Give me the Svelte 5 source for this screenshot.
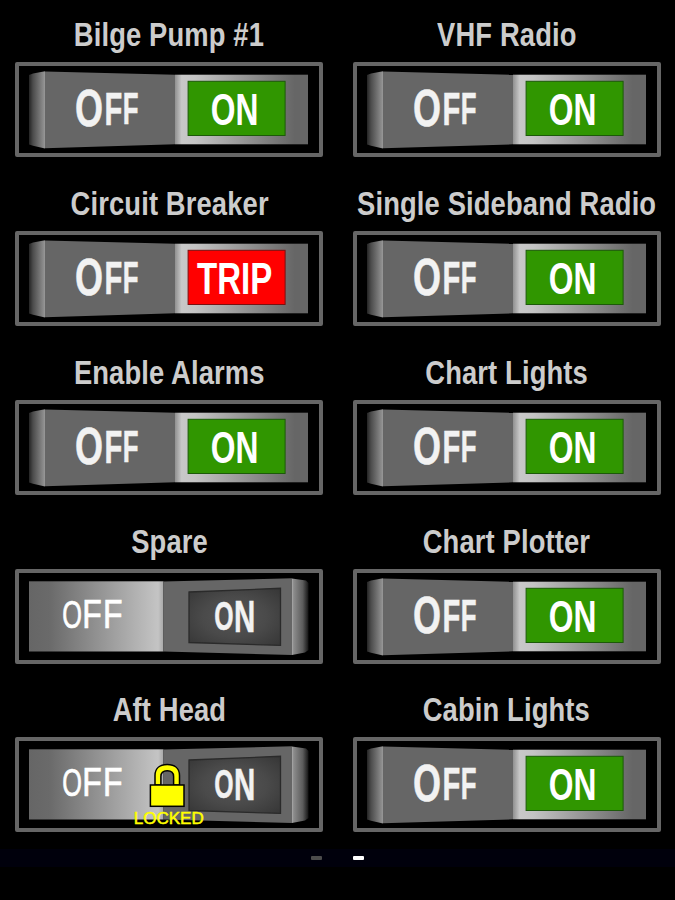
<script lang="ts">
	type Glyph = { ch: string; x: number; y: number; size: number; sx: number; weight?: number };
	type Circuit = { name: string; state: 'on' | 'off' | 'trip'; locked?: boolean };

	const circuits: Circuit[] = [
		{ name: 'Bilge Pump #1', state: 'on' },
		{ name: 'VHF Radio', state: 'on' },
		{ name: 'Circuit Breaker', state: 'trip' },
		{ name: 'Single Sideband Radio', state: 'on' },
		{ name: 'Enable Alarms', state: 'on' },
		{ name: 'Chart Lights', state: 'on' },
		{ name: 'Spare', state: 'off' },
		{ name: 'Chart Plotter', state: 'on' },
		{ name: 'Aft Head', state: 'off', locked: true },
		{ name: 'Cabin Lights', state: 'on' }
	];

	// Letters shrink as the raised face recedes, so each has its own size.
	const raisedOff: Glyph[] = [
		{ ch: 'O', x: 60, y: 64.3, size: 51.5, sx: 0.7 },
		{ ch: 'F', x: 89.6, y: 62.8, size: 47, sx: 0.62 },
		{ ch: 'F', x: 107.8, y: 62.3, size: 44.5, sx: 0.58 }
	];
	const flatOff: Glyph[] = [
		{ ch: 'O', x: 47.3, y: 58.7, size: 39, sx: 0.65, weight: 400 },
		{ ch: 'F', x: 67.2, y: 58.7, size: 40, sx: 0.8, weight: 400 },
		{ ch: 'F', x: 88, y: 58.7, size: 40, sx: 0.8, weight: 400 }
	];
	const raisedOn: Glyph[] = [
		{ ch: 'O', x: 199.3, y: 61.4, size: 40, sx: 0.62 },
		{ ch: 'N', x: 219, y: 63, size: 44, sx: 0.67 }
	];
</script>

{#snippet word(glyphs: Glyph[])}
	<g class="word">
		{#each glyphs as g}
			<text
				class:thin={g.weight === 400}
				transform="translate({g.x} {g.y}) scale({g.sx} 1)"
				font-size={g.size}
				font-weight={g.weight ?? 700}>{g.ch}</text>
		{/each}
	</g>
{/snippet}

<svg class="defs" width="0" height="0" aria-hidden="true">
	<defs>
		<linearGradient id="edge-left">
			<stop offset="0" stop-color="#242424" />
			<stop offset="0.25" stop-color="#4c4c4c" />
			<stop offset="0.9" stop-color="#8c8c8c" />
			<stop offset="1" stop-color="#999" />
		</linearGradient>
		<linearGradient id="edge-right">
			<stop offset="0" stop-color="#aaa" />
			<stop offset="0.1" stop-color="#8c8c8c" />
			<stop offset="0.65" stop-color="#5c5c5c" />
			<stop offset="1" stop-color="#141414" />
		</linearGradient>
		<linearGradient id="flat-right">
			<stop offset="0" stop-color="#909090" />
			<stop offset="0.05" stop-color="#c8c8c8" />
			<stop offset="0.15" stop-color="#c4c4c4" />
			<stop offset="0.9" stop-color="#666" />
			<stop offset="1" stop-color="#666" />
		</linearGradient>
		<linearGradient id="flat-left">
			<stop offset="0" stop-color="#666" />
			<stop offset="0.15" stop-color="#6a6a6a" />
			<stop offset="0.96" stop-color="#c4c4c4" />
			<stop offset="1" stop-color="#a8a8a8" />
		</linearGradient>
		<radialGradient id="lamp-off" cx="0.5" cy="0.5" r="0.7">
			<stop offset="0" stop-color="#555" />
			<stop offset="0.5" stop-color="#4a4a4a" />
			<stop offset="1" stop-color="#363636" />
		</radialGradient>
	</defs>
</svg>

<main>
	<div class="panel">
		{#each circuits as c}
			<section>
				<h2><span>{c.name}</span></h2>
				<div class="frame">
					<svg viewBox="0 0 308 95" width="308" height="95">
						{#if c.state === 'off'}
							<rect x="14" y="12.3" width="134.5" height="70.2" fill="url(#flat-left)" />
							<polygon points="148.5,12.6 277,9.2 277,86 148.5,82.4" fill="#666" />
							<polygon points="277,9.4 291,11.6 293.5,14 293.5,81 290,83.4 277,86" fill="url(#edge-right)" />
							<polygon class="lamp-off" points="174,23 265.5,19.3 265.5,76.4 174,73.5" />
							{@render word(flatOff)}
							{@render word(raisedOn)}
						{:else}
							<polygon points="14,13 18,11.4 30,9.2 30,86.4 18,83.8 14,82.4" fill="url(#edge-left)" />
							<polygon points="30,9.4 160,12.8 160,82.3 30,86.3" fill="#666" />
							<rect x="160" y="12.7" width="133" height="69.6" fill="url(#flat-right)" />
							<rect class="lamp {c.state}" x="173.1" y="19.3" width="97" height="54.2" />
							{@render word(raisedOff)}
							<text class="lamp-text" transform="translate(219.6 62.6) scale({c.state === 'trip' ? 0.76 : 0.73} 1)">
								{c.state === 'trip' ? 'TRIP' : 'ON'}
							</text>
						{/if}
						{#if c.locked}
							<g class="lock">
								<path
									d="M140 48V38.5C140 31.2 145 27.6 152.2 27.6S164.5 31.2 164.5 38.5V48H158.6V39.5C158.6 35.7 156.4 33.7 152.2 33.7S145.9 35.7 145.9 39.5V48Z" />
								<rect x="135.4" y="48" width="33.6" height="21.3" />
							</g>
							<text class="locked" x="118.7" y="86.6" textLength="70" lengthAdjust="spacingAndGlyphs">LOCKED</text>
						{/if}
					</svg>
				</div>
			</section>
		{/each}
	</div>
	<nav>
		<i></i>
		<i class="current"></i>
	</nav>
</main>

<style>
	:global(body) {
		margin: 0;
		background: #000;
	}

	main {
		width: 675px;
		height: 900px;
		overflow: hidden;
		background: #000;
		font-family: 'Liberation Sans', Arial, sans-serif;
	}

	.defs {
		display: block;
	}

	.panel {
		display: grid;
		grid-template-columns: repeat(2, 337.5px);
		grid-template-rows: repeat(5, 168.75px);
		height: 849px;
		margin-left: 0.5px;
	}

	section {
		display: flex;
		flex-direction: column;
		align-items: center;
	}

	h2 {
		display: flex;
		justify-content: center;
		align-items: flex-end;
		box-sizing: border-box;
		width: 100%;
		height: 62.3px;
		margin: 0;
		padding-bottom: 8px;
		color: #ccc;
		font-size: 32.5px;
		line-height: 37px;
		white-space: nowrap;
	}

	h2 span {
		letter-spacing: 0.15px;
		transform: scaleX(0.842);
	}

	.frame {
		box-sizing: border-box;
		width: 308px;
		height: 95px;
		border: 4px solid #666;
		border-radius: 2px;
	}

	.frame svg {
		display: block;
		margin: -4px;
	}

	.word {
		fill: #f2f2f2;
		stroke: #f2f2f2;
		stroke-width: 0.5;
	}

	.thin {
		fill: #fff;
		stroke: #fff;
		stroke-width: 0.7;
	}

	.lamp {
		stroke: #1c5a08;
		stroke-width: 1;
	}

	.on {
		fill: #309600;
	}

	.trip {
		fill: #f00;
		stroke: #7a1010;
	}

	.lamp-off {
		fill: url(#lamp-off);
		stroke: #2a2a2a;
		stroke-width: 1.3;
	}

	.lamp-text {
		fill: #fff;
		font-size: 43.5px;
		font-weight: 700;
		text-anchor: middle;
	}

	.lock {
		fill: #ff0;
		stroke: #000;
		stroke-width: 1.5;
	}

	.locked {
		fill: #ff0;
		stroke: #ff0;
		stroke-width: 0.5;
		font-size: 17px;
	}

	nav {
		display: flex;
		justify-content: center;
		align-items: center;
		gap: 31px;
		height: 18px;
		background: #00000c;
	}

	nav i {
		width: 11px;
		height: 4px;
		border-radius: 1px;
		background: #4c4c4c;
	}

	nav .current {
		background: #fff;
	}
</style>
